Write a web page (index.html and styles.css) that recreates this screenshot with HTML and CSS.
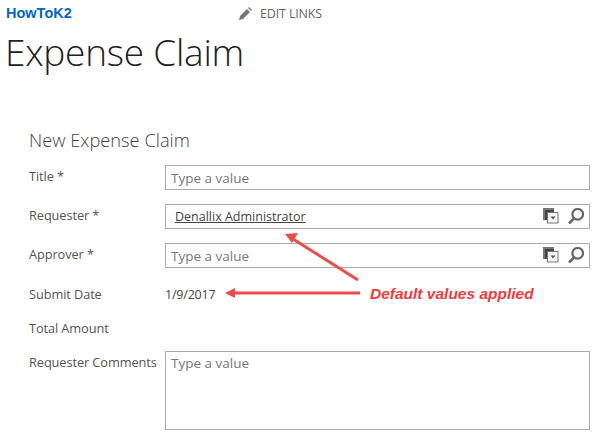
FILE: index.html
```html
<!DOCTYPE html>
<html lang="en">
<head>
<meta charset="utf-8">
<title>Expense Claim</title>
<link rel="stylesheet" href="styles.css">
</head>
<body>
<div class="page">
  <header class="top">
    <a class="site">HowToK2</a>
    <span class="edit">
      <svg class="pencil" width="14" height="14" viewBox="0 0 14 14"><path d="M1 13l1-4 7-7 3 3-7 7z M10 1l1-1 3 3-1 1z" fill="#777"/></svg>
      EDIT LINKS
    </span>
  </header>
  <h1 class="title">Expense Claim</h1>
  <main class="form">
    <h2 class="form-title">New Expense Claim</h2>
    <div class="row">
      <span class="label">Title *</span>
      <div class="box"><span class="ph">Type a value</span></div>
    </div>
    <div class="row">
      <span class="label">Requester *</span>
      <div class="box">
        <span class="person">Denallix Administrator</span>
        <span class="icons">
          <svg width="16" height="16" viewBox="0 0 16 16"><path d="M0 0h11v3H4v9H0z" fill="#777"/><path d="M2 2h9v2H4v8H2z" fill="#444"/><rect x="4.500" y="4.500" width="10.500" height="10.500" fill="#f4f4f4" stroke="#777"/><path d="M7.500 8.500h5l-2.500 3z" fill="#555"/></svg>
          <svg width="16" height="16" viewBox="0 0 16 16"><circle cx="9.700" cy="6.300" r="5.300" fill="none" stroke="#666" stroke-width="2.200"/><path d="M6 10.500L1 15.500" stroke="#666" stroke-width="2.500"/></svg>
        </span>
      </div>
    </div>
    <div class="row">
      <span class="label">Approver *</span>
      <div class="box">
        <span class="ph">Type a value</span>
        <span class="icons">
          <svg width="16" height="16" viewBox="0 0 16 16"><path d="M0 0h11v3H4v9H0z" fill="#777"/><path d="M2 2h9v2H4v8H2z" fill="#444"/><rect x="4.500" y="4.500" width="10.500" height="10.500" fill="#f4f4f4" stroke="#777"/><path d="M7.500 8.500h5l-2.500 3z" fill="#555"/></svg>
          <svg width="16" height="16" viewBox="0 0 16 16"><circle cx="9.700" cy="6.300" r="5.300" fill="none" stroke="#666" stroke-width="2.200"/><path d="M6 10.500L1 15.500" stroke="#666" stroke-width="2.500"/></svg>
        </span>
      </div>
    </div>
    <div class="row row-text">
      <span class="label">Submit Date</span>
      <span class="value">1/9/2017</span>
    </div>
    <div class="row row-text row-total">
      <span class="label">Total Amount</span>
    </div>
    <div class="row row-area">
      <span class="label">Requester Comments</span>
      <div class="box area"><span class="ph">Type a value</span></div>
    </div>
  </main>
  <svg class="arrows" width="600" height="437" viewBox="0 0 600 437">
    <path d="M358 280L293 239" stroke="#ee4c4c" stroke-width="3" fill="none"/>
    <path d="M285 234l13-1-6 10z" fill="#ee4c4c"/>
    <path d="M360 293H232" stroke="#ee4c4c" stroke-width="3" fill="none"/>
    <path d="M225 293l10-5v10z" fill="#ee4c4c"/>
  </svg>
  <span class="note">Default values applied</span>
</div>
</body>
</html>
```
FILE: styles.css
```css
* { box-sizing: border-box; }
html, body { margin: 0; padding: 0; }
body { background: #fff; font-family: "Open Sans", "Liberation Sans", sans-serif; color: #444; overflow: hidden; }
.page { position: relative; width: 600px; height: 437px; overflow: hidden; }
.top { display: flex; align-items: center; height: 27px; padding-left: 6px; }
.site { width: 232px; margin-top: -1px; font: bold 14.500px "Liberation Sans", sans-serif; color: #0066cc; }
.edit { display: flex; align-items: center; gap: 8px; font-size: 12.500px; color: #666; letter-spacing: -0.15px; }
.title { margin: 0; padding-left: 5px; height: 49px; font-size: 37px; line-height: 50px; font-weight: 300; color: #222; letter-spacing: -0.25px; }
.form { padding: 50px 10px 0 29px; }
.form-title { margin: 0 0 11px; height: 28px; font-size: 18.300px; line-height: 28px; font-weight: 300; color: #444; }
.row { display: grid; grid-template-columns: 136px 425px; align-items: center; height: 25px; margin-bottom: 14px; font-size: 12.800px; }
.label { color: #555; letter-spacing: -0.1px; white-space: nowrap; margin-top: -3px; }
.box { display: flex; align-items: center; justify-content: space-between; height: 25px; border: 1px solid #ababab; padding: 0 5px 0 5px; font-size: 13.500px; }
.ph { color: #777; }
.person { padding-left: 4px; color: #444; text-decoration: underline; font-size: 12.500px; }
.icons { display: flex; gap: 9px; margin-top: -2px; }
.row-text { height: 25px; margin-bottom: 9px; }
.row-text .label { margin-top: -2px; }
.value { font-size: 12.500px; color: #444; letter-spacing: -0.2px; }
.row-total { margin-bottom: 10px; }
.row-area { align-items: start; height: 79px; margin: 0; }
.row-area .label { margin-top: 2px; }
.area { height: 79px; align-items: flex-start; padding-top: 2px; }
.arrows { position: absolute; left: 0; top: 0; pointer-events: none; }
.note { position: absolute; left: 370px; top: 285px; font: italic bold 15.500px "Liberation Sans", sans-serif; color: #ee3b3b; }
```
